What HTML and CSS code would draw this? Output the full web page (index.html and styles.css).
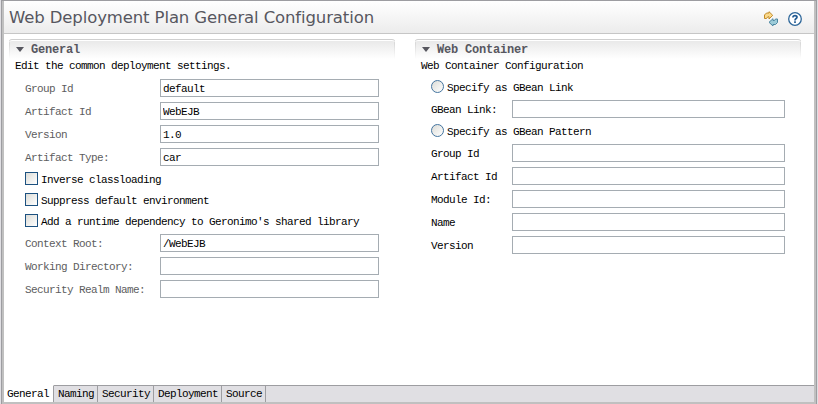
FILE: index.html
```html
<!DOCTYPE html>
<html lang="en">
<head>
<meta charset="utf-8">
<title>Web Deployment Plan</title>
<link rel="stylesheet" href="styles.css">
</head>
<body>
<div class="editor">
  <header class="title-bar">
    <h1 class="title">Web Deployment Plan General Configuration</h1>
    <div class="actions">
      <svg class="sync" width="16" height="16" viewBox="0 0 16 16">
        <path d="M1.500 7.500V4L3.500 2H6V0.700L9.700 4.300L6 8V5.800H4.800L3.500 7.500Z" fill="#fbd98a" stroke="#c08a28"/>
        <path d="M14.500 8V11.500L12.500 13.500H10V15L6 11.300L10 7.700V9.500H11.500L12.500 8Z" fill="#9ccbd8" stroke="#4b86a0"/>
      </svg>
      <svg class="help" width="14" height="14" viewBox="0 0 14 14">
        <circle cx="7" cy="7" r="6.300" fill="#fff" stroke="#2d6699" stroke-width="1.300"/>
        <path d="M5 5.500V5C5 3.200 9 3.200 9 5.200C9 6.600 7 6.500 7 8.400M7 9.300V11" fill="none" stroke="#215a92" stroke-width="1.700"/>
      </svg>
    </div>
  </header>
  <main class="page">
    <section class="section">
      <h2 class="section-head"><i class="twistie"></i>General</h2>
      <p class="desc">Edit the common deployment settings.</p>
      <div class="form general">
        <label class="row"><span>Group Id</span><input value="default"></label>
        <label class="row"><span>Artifact Id</span><input value="WebEJB"></label>
        <label class="row"><span>Version</span><input value="1.0"></label>
        <label class="row"><span>Artifact Type:</span><input value="car"></label>
        <label class="option"><i class="box"></i>Inverse classloading</label>
        <label class="option"><i class="box"></i>Suppress default environment</label>
        <label class="option"><i class="box"></i>Add a runtime dependency to Geronimo's shared library</label>
        <label class="row"><span>Context Root:</span><input value="/WebEJB"></label>
        <label class="row"><span>Working Directory:</span><input></label>
        <label class="row"><span>Security Realm Name:</span><input></label>
      </div>
    </section>
    <section class="section">
      <h2 class="section-head"><i class="twistie"></i>Web Container</h2>
      <p class="desc">Web Container Configuration</p>
      <div class="form container">
        <label class="option"><i class="box radio"></i>Specify as GBean Link</label>
        <label class="row"><span>GBean Link:</span><input></label>
        <label class="option"><i class="box radio"></i>Specify as GBean Pattern</label>
        <label class="row"><span>Group Id</span><input></label>
        <label class="row"><span>Artifact Id</span><input></label>
        <label class="row"><span>Module Id:</span><input></label>
        <label class="row"><span>Name</span><input></label>
        <label class="row"><span>Version</span><input></label>
      </div>
    </section>
  </main>
  <nav class="tabs">
    <span class="tab active">General</span><span class="tab">Naming</span><span class="tab">Security</span><span class="tab">Deployment</span><span class="tab">Source</span><span class="filler"></span>
  </nav>
</div>
</body>
</html>
```
FILE: styles.css
```css
* { box-sizing: border-box; }

body {
  margin: 0;
  padding: 0 1px;
  width: 818px;
  height: 404px;
  overflow: hidden;
  background: #e0dfe3;
  color: #000;
  font: 11px/14px "Liberation Mono", monospace;
  letter-spacing: -0.6px;
  white-space: nowrap;
}

.editor {
  display: flex;
  flex-direction: column;
  height: 404px;
  border: 1px solid #9d9da1;
  border-bottom: 0;
  box-shadow: inset 0 0 0 2px #c0c0c0;
  padding: 0 2px 2px;
}

.title-bar {
  display: flex;
  justify-content: space-between;
  height: 33px;
  flex: none;
  padding: 0 12px 0 5px;
  background: linear-gradient(#fff, #ececec);
  border-bottom: 1px solid #c6c6c6;
}

.title {
  margin: 6px 0 0;
  font: 16.5px/22px "DejaVu Sans", sans-serif;
  letter-spacing: -0.12px;
  color: #57575f;
}

.actions {
  display: flex;
  align-items: flex-start;
  gap: 9px;
  padding-top: 10px;
}

.help { margin-top: 1px; }

.page {
  flex: 1;
  display: grid;
  grid-template-columns: 386px 386px;
  column-gap: 20px;
  padding: 5px 0 0 5px;
  background: #fff;
}

.section-head {
  display: flex;
  align-items: center;
  height: 20px;
  margin: 0;
  padding-left: 7px;
  border-top: 1px solid #cfcfcf;
  border-radius: 3px 3px 0 0;
  background:
    linear-gradient(#d0d0d0, #fff) left / 1px 100% no-repeat,
    linear-gradient(#d0d0d0, #fff) right / 1px 100% no-repeat,
    linear-gradient(#e8e8e8, #fff);
  box-shadow: inset 0 1px #fff;
  font: bold 12px/18px "Liberation Mono", monospace;
  letter-spacing: -0.2px;
  color: #57575f;
}

.twistie {
  width: 8px;
  height: 5px;
  margin-right: 7px;
  background: #57575f;
  clip-path: polygon(0 0, 100% 0, 50% 100%);
}

.desc {
  margin: 0 0 6px;
  padding-left: 6px;
}

.form { padding-left: 16px; }

.row {
  display: grid;
  grid-template-columns: 135px 219px;
  align-items: center;
  height: 18px;
  margin-bottom: 5px;
}

.row span { padding-top: 1px; }

.general .row { color: #5d5d60; }

.container { padding-left: 15px; }
.container .row { grid-template-columns: 82px 273px; }
.container .row span { padding-left: 1px; }

input {
  width: 100%;
  height: 18px;
  padding: 1px 0 0 2px;
  border: 1px solid #a5acb2;
  border-radius: 0;
  background: #fff;
  color: #000;
  font: inherit;
  letter-spacing: inherit;
}

.option {
  display: flex;
  align-items: center;
  gap: 3px;
  height: 16px;
  margin-bottom: 5px;
  padding-top: 1px;
}

.box {
  width: 13px;
  height: 13px;
  margin-bottom: 2px;
  border: 1px solid #1c5180;
  background: linear-gradient(135deg, #dcdcd7, #fff);
}

.radio {
  margin-left: 1px;
  border-color: #44749f;
  border-radius: 50%;
}

.tabs {
  display: flex;
  height: 17px;
  flex: none;
  background: #fff;
}

.tab {
  padding: 1px 3px 0 4px;
  border-top: 1px solid #9d9da1;
  border-right: 1px solid #9d9da1;
  background: #e0dfe3;
}

.active {
  padding: 1px 4px 0 3px;
  border-top-color: #fff;
  background: #fff;
}

.filler {
  flex: 1;
  border-top: 1px solid #9d9da1;
  background: #e0dfe3;
}
```
